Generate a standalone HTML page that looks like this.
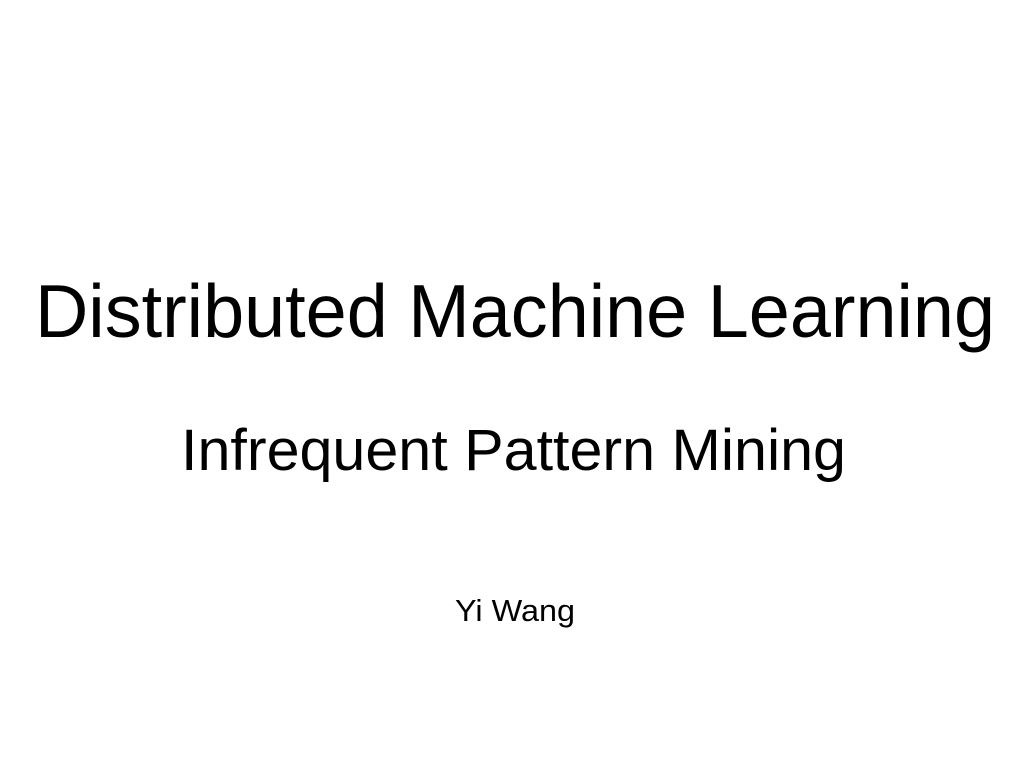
<!DOCTYPE html>
<html><head><meta charset="utf-8"><style>html,body{margin:0;padding:0;background:#fff;width:1028px;height:772px;overflow:hidden}</style></head>
<body>
<svg width="1028" height="772" xmlns="http://www.w3.org/2000/svg" style="display:block">
<rect width="1028" height="772" fill="#fff"/>
<g font-family="Liberation Sans, sans-serif" fill="#000">
<text x="35" y="337" font-size="75" textLength="960" lengthAdjust="spacingAndGlyphs">Distributed Machine Learning</text>
<text x="181" y="470" font-size="58" textLength="665" lengthAdjust="spacingAndGlyphs">Infrequent Pattern Mining</text>
<text x="455" y="621" font-size="31" textLength="120" lengthAdjust="spacingAndGlyphs">Yi Wang</text>
</g>
</svg>
</body></html>
